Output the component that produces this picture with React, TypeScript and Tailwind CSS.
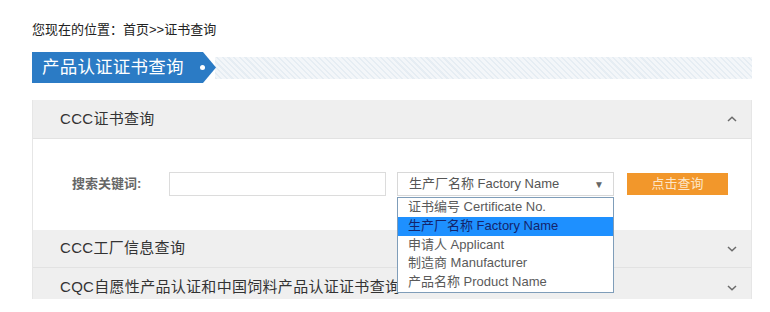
import React from "react";

const cjk = "font-['Liberation_Sans','Noto_Sans_CJK_SC',sans-serif]";

function Chevron({ up }: { up?: boolean }) {
  return (
    <svg width="10" height="6" viewBox="0 0 10 6" className="block">
      <polyline
        points={up ? "1,5 5,1.2 9,5" : "1,1 5,4.8 9,1"}
        fill="none"
        stroke="#6b6b6b"
        strokeWidth="1.5"
      />
    </svg>
  );
}

export default function App() {
  const options = [
    "证书编号 Certificate No.",
    "生产厂名称 Factory Name",
    "申请人 Applicant",
    "制造商 Manufacturer",
    "产品名称 Product Name",
  ];
  return (
    <div className={`w-[770px] h-[312px] bg-white overflow-hidden ${cjk}`}>
      <div className="pl-[32px] pt-[20px] w-[752px]">
        <div className="h-[20px] leading-[20px] text-[13px] text-[#222]">
          您现在的位置：首页&gt;&gt;证书查询
        </div>
        <div className="mt-[12px] h-[31px] flex items-center">
          <div className="relative z-10 w-[184px] h-[31px] bg-[#2b7bc5] [clip-path:polygon(0_0,171px_0,184px_50%,171px_100%,0_100%)] flex items-center pl-[10px]">
            <span className="text-white text-[17.5px] leading-none tracking-[0.2px]">产品认证证书查询</span>
            <span className="ml-[16px] w-[5px] h-[5px] rounded-full bg-white"></span>
          </div>
          <div className="flex-1 -ml-[1px] h-[22px] bg-[repeating-linear-gradient(45deg,#e6edf3_0px,#e6edf3_1.5px,#f3f6f9_1.5px,#f3f6f9_4px)]"></div>
        </div>
        <div className="mt-[17px] w-[720px] border-x border-[#e6e6e6]">
          <div className="h-[39px] bg-[#efefef] border-b border-[#e2e2e2] flex items-center justify-between pl-[27px] pr-[14px]">
            <span className="text-[15px] text-[#333] tracking-[0.3px]">CCC证书查询</span>
            <Chevron up />
          </div>
          <div className="h-[91px] bg-white pt-[33px] flex items-start">
            <span className="ml-[39px] w-[97px] h-[24px] leading-[24px] text-[13px] font-bold text-[#666]">
              搜索关键词:
            </span>
            <div className="w-[217px] h-[24px] border border-[#dcdcdc] bg-white"></div>
            <div className="relative ml-[11px] w-[217px]">
              <div className="h-[24px] border border-[#d8d8d8] bg-white flex items-center justify-between pl-[11px] pr-[9px]">
                <span className="text-[13px] text-[#555]">生产厂名称 Factory Name</span>
                <span className="text-[10px] text-[#666]">▼</span>
              </div>
              <div className="absolute left-0 top-[25px] z-20 w-[217px] border border-[#7f9db9] bg-white">
                {options.map((o, i) => (
                  <div
                    key={o}
                    className={`h-[18.75px] leading-[18.75px] pl-[10px] text-[13px] ${
                      i === 1 ? "bg-[#1e90ff] text-[#14246b]" : "text-[#5a5a5a]"
                    }`}
                  >
                    {o}
                  </div>
                ))}
              </div>
            </div>
            <div className="ml-[13px] mt-[1px] w-[101px] h-[22px] bg-[#f2972b] flex items-center justify-center text-[13px] text-[#fde6c8]">
              点击查询
            </div>
          </div>
          <div className="h-[38px] bg-[#efefef] border-b border-[#e2e2e2] flex items-center justify-between pl-[27px] pr-[14px]">
            <span className="text-[15px] text-[#333] tracking-[0.3px]">CCC工厂信息查询</span>
            <Chevron />
          </div>
          <div className="h-[31px] bg-[#efefef] flex items-start justify-between pl-[27px] pr-[14px] pt-[9px]">
            <span className="text-[15px] leading-[20px] text-[#333] tracking-[0.3px] whitespace-nowrap">CQC自愿性产品认证和中国饲料产品认证证书查询</span>
            <span className="mt-[8px]">
              <Chevron />
            </span>
          </div>
        </div>
      </div>
    </div>
  );
}
